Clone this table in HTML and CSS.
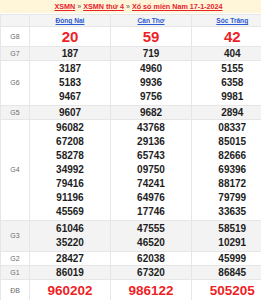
FILE: index.html
```html
<!DOCTYPE html>
<html lang="vi">
<head>
<meta charset="utf-8">
<title>XSMN 17-1-2024</title>
<link rel="stylesheet" href="styles.css">
</head>
<body>
<div class="page">
  <div class="crumb">
    <a href="#">XSMN</a> <span class="sep">»</span> <a href="#">XSMN thứ 4</a> <span class="sep">»</span> <a href="#">Xổ số miền Nam 17-1-2024</a>
  </div>
  <table class="kq">
    <colgroup><col class="c-lbl"><col class="c-prov"><col class="c-prov"><col class="c-last"></colgroup>
    <thead>
      <tr class="head">
        <th></th>
        <th><a href="#">Đồng Nai</a></th>
        <th><a href="#">Cần Thơ</a></th>
        <th><a href="#">Sóc Trăng</a></th>
      </tr>
    </thead>
    <tbody>
      <tr class="g8">
        <td class="lbl">G8</td><td>20</td><td>59</td><td>42</td>
      </tr>
      <tr class="alt single">
        <td class="lbl">G7</td><td>187</td><td>719</td><td>404</td>
      </tr>
      <tr class="multi">
        <td class="lbl">G6</td>
        <td><div>3187</div><div>5183</div><div>9467</div></td>
        <td><div>4960</div><div>9936</div><div>9756</div></td>
        <td><div>5155</div><div>6358</div><div>9981</div></td>
      </tr>
      <tr class="alt single">
        <td class="lbl">G5</td><td>9607</td><td>9682</td><td>2894</td>
      </tr>
      <tr class="multi">
        <td class="lbl">G4</td>
        <td><div>96082</div><div>67208</div><div>58278</div><div>34992</div><div>79416</div><div>91196</div><div>45569</div></td>
        <td><div>43768</div><div>29136</div><div>65743</div><div>09750</div><div>74241</div><div>64976</div><div>17746</div></td>
        <td><div>08337</div><div>85015</div><div>82666</div><div>69396</div><div>88172</div><div>79799</div><div>33635</div></td>
      </tr>
      <tr class="alt multi">
        <td class="lbl">G3</td>
        <td><div>61046</div><div>35220</div></td>
        <td><div>47555</div><div>46520</div></td>
        <td><div>58519</div><div>10291</div></td>
      </tr>
      <tr class="single">
        <td class="lbl">G2</td><td>28427</td><td>62038</td><td>45999</td>
      </tr>
      <tr class="alt single">
        <td class="lbl">G1</td><td>86019</td><td>67320</td><td>86845</td>
      </tr>
      <tr class="db">
        <td class="lbl">ĐB</td><td>960202</td><td>986122</td><td>505205</td>
      </tr>
    </tbody>
  </table>
</div>
</body>
</html>
```

FILE: styles.css
```css
html, body {
  margin: 0;
  padding: 0;
  overflow: hidden;
  background: #fff;
}

.page {
  width: 261px;
  font-family: "Liberation Sans", Arial, sans-serif;
}

.crumb {
  height: 13px;
  line-height: 13px;
  margin-bottom: 1px;
  padding-left: 16px;
  background: #fff6d9;
  text-align: center;
  font-size: 7.2px;
  font-weight: bold;
  white-space: nowrap;
  color: #444;
}

.crumb a {
  color: #e8212b;
  text-decoration: underline;
}

.crumb .sep {
  color: #555;
  font-weight: normal;
}

.kq {
  width: 261px;
  border-collapse: collapse;
  table-layout: fixed;
}

.c-lbl { width: 29px; }
.c-prov { width: 81px; }
.c-last { width: 70px; }

.kq th,
.kq td {
  border: 1px solid #e6e6e6;
  padding: 0;
  text-align: center;
  vertical-align: middle;
}

.kq th:last-child,
.kq td:last-child {
  border-right: 0;
  padding-left: 11px;
}

.head th {
  background: #f4f4f4;
  height: 11px;
  line-height: 11px;
  font-size: 6.6px;
  font-weight: bold;
}

.head a {
  color: #2a5bd0;
  text-decoration: underline;
}

.kq td {
  font-size: 10px;
  font-weight: bold;
  color: #1e1e1e;
}

.kq td.lbl {
  font-size: 7px;
  font-weight: normal;
  color: #6a6a6a;
}

.alt td {
  background: #f3f3f3;
}

.g8 td {
  line-height: 19px;
  font-size: 15px;
  color: #ee1f26;
}

.single td {
  line-height: 13px;
}

.multi td {
  line-height: 14px;
}

.multi td:not(:last-child) {
  padding: 1px 0;
}

.multi td:last-child {
  padding-top: 1px;
  padding-bottom: 1px;
}

.db td {
  line-height: 21px;
  font-size: 13.5px;
  color: #ee1f26;
}
```
